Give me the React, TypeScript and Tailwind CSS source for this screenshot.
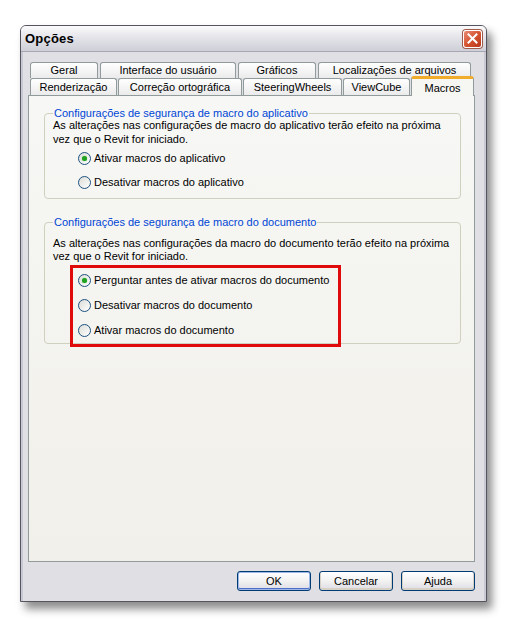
import type { ReactNode } from "react";

const FONT = { fontFamily: '"Liberation Sans", Arial, sans-serif' };

const ROW1 = [
  { label: "Geral", w: "w-[68px]" },
  { label: "Interface do usuário", w: "w-[136px]" },
  { label: "Gráficos", w: "w-[78px]" },
  { label: "Localizações de arquivos", w: "w-[153px]" },
];

const ROW2 = [
  { label: "Renderização", w: "w-[87px]" },
  { label: "Correção ortográfica", w: "w-[124px]" },
  { label: "SteeringWheels", w: "w-[99px]" },
  { label: "ViewCube", w: "w-[67px]" },
];

function Tab({ label, w }: { label: string; w: string }) {
  return (
    <div
      className={`${w} h-full shrink-0 flex items-center justify-center rounded-t-[3px] border border-b-0 border-[#919b9c] bg-linear-to-b from-white to-[#ebebeb] text-[11px] text-black leading-none`}
    >
      {label}
    </div>
  );
}

function Radio({ checked, label }: { checked?: boolean; label: string }) {
  return (
    <div className="flex items-center gap-[3px]">
      <span className="w-[13px] h-[13px] shrink-0 rounded-full border border-[#1c5180] bg-linear-to-br from-[#dcdcd7] to-white flex items-center justify-center">
        {checked && <span className="w-[5px] h-[5px] rounded-full bg-[#21a121] shadow-[0_0_1px_#5fcf5f]" />}
      </span>
      <span className="text-[11px] text-black leading-none">{label}</span>
    </div>
  );
}

function Group({ title, children, className }: { title: string; children: ReactNode; className?: string }) {
  return (
    <fieldset className={`rounded-[4px] border border-[#d0d0bf] pl-[8px] pr-[8px] ${className ?? ""}`}>
      <legend className="px-[1px] text-[11px] leading-[13px] text-[#0046d5]">{title}</legend>
      {children}
    </fieldset>
  );
}

function Button({ label, primary }: { label: string; primary?: boolean }) {
  return (
    <button
      type="button"
      className={`w-[74px] h-[20px] rounded-[3px] border border-[#003c74] bg-linear-to-b from-white via-[#f2f2f2] to-[#dcdce4] text-[11px] text-black leading-none ${
        primary ? "shadow-[inset_0_0_0_1px_#9db7e8,inset_0_-1px_0_1px_#4e6fc7]" : "shadow-[inset_0_-1px_0_1px_#d6d0c5]"
      }`}
    >
      {label}
    </button>
  );
}

export default function App() {
  return (
    <div className="min-h-[626px] bg-white pt-[25px] pl-[20px]" style={FONT}>
      <div className="w-[467px] h-[577px] flex flex-col rounded-t-[6px] border border-[#55555f] bg-[#e0dfe3] shadow-[5px_7px_9px_rgba(0,0,0,0.45)]">
        {/* title bar */}
        <div className="h-[26px] shrink-0 flex items-center justify-between rounded-t-[5px] bg-linear-to-b from-[#fbfbfc] via-[#e2e2e8] to-[#cfcfd8] pl-[4px] pr-[4px] border-b border-[#a7a7b3]">
          <span className="text-[13px] font-bold text-black tracking-[0.2px]">Opções</span>
          <span className="w-[19px] h-[18px] rounded-[3px] border border-white bg-linear-to-br from-[#e98a72] via-[#d5532f] to-[#b8361a] flex items-center justify-center shadow-[0_0_0_1px_#a05a4a]">
            <svg width="11" height="11" viewBox="0 0 11 11">
              <path d="M1.5 1.5 L9.5 9.5 M9.5 1.5 L1.5 9.5" stroke="white" strokeWidth="2" strokeLinecap="square" />
            </svg>
          </span>
        </div>

        {/* body */}
        <div className="flex-1 flex flex-col pl-[5px] pr-[9px] pt-[10px] border-x-[2px] border-[#c9c9d3]">
          {/* tabs */}
          <div className="flex flex-col pl-[2px]">
            <div className="h-[16px] flex gap-[2px]">
              {ROW1.map((t) => (
                <Tab key={t.label} {...t} />
              ))}
            </div>
            <div className="h-[17px] flex items-end gap-[1px]">
              {ROW2.map((t) => (
                <Tab key={t.label} {...t} />
              ))}
              <div className="relative z-10 w-[63px] h-[20px] mb-[-1px] shrink-0 flex items-start justify-center pt-[4px] rounded-t-[3px] border border-b-0 border-[#919b9c] border-t-[3px] border-t-[#f2ac2b] bg-[#f6f6f3] text-[11px] text-black leading-none">
                Macros
              </div>
            </div>
          </div>

          {/* panel */}
          <div className="h-[467px] shrink-0 border border-[#919b9c] bg-linear-to-b from-[#f7f7f5] to-[#f1f0ea] pl-[15px] pr-[13px] pt-[11px]">
            <Group title="Configurações de segurança de macro do aplicativo" className="h-[92px]">
              <p className="text-[11px] leading-[14px] text-black -mt-[2px]">
                As alterações nas configurações de macro do aplicativo terão efeito na próxima vez que o Revit for iniciado.
              </p>
              <div className="flex flex-col pl-[25px]">
                <div className="h-[24px] flex items-center">
                  <Radio checked label="Ativar macros do aplicativo" />
                </div>
                <div className="h-[24px] flex items-center">
                  <Radio label="Desativar macros do aplicativo" />
                </div>
              </div>
            </Group>

            <Group title="Configurações de segurança de macro do documento" className="mt-[17px] h-[128px]">
              <p className="text-[11px] leading-[13px] text-black mt-[8px]">
                As alterações nas configurações da macro do documento terão efeito na próxima vez que o Revit for iniciado.
              </p>
              <div className="ml-[17px] mt-[2px] w-[271px] h-[82px] border-[3px] border-[#e00a0a] pl-[5px] flex flex-col">
                <div className="h-[25px] flex items-center">
                  <Radio checked label="Perguntar antes de ativar macros do documento" />
                </div>
                <div className="h-[25px] flex items-center">
                  <Radio label="Desativar macros do documento" />
                </div>
                <div className="h-[25px] flex items-center">
                  <Radio label="Ativar macros do documento" />
                </div>
              </div>
            </Group>
          </div>

          {/* buttons */}
          <div className="flex justify-end gap-[8px] pt-[9px]">
            <Button label="OK" primary />
            <Button label="Cancelar" />
            <Button label="Ajuda" />
          </div>
        </div>
      </div>
    </div>
  );
}
